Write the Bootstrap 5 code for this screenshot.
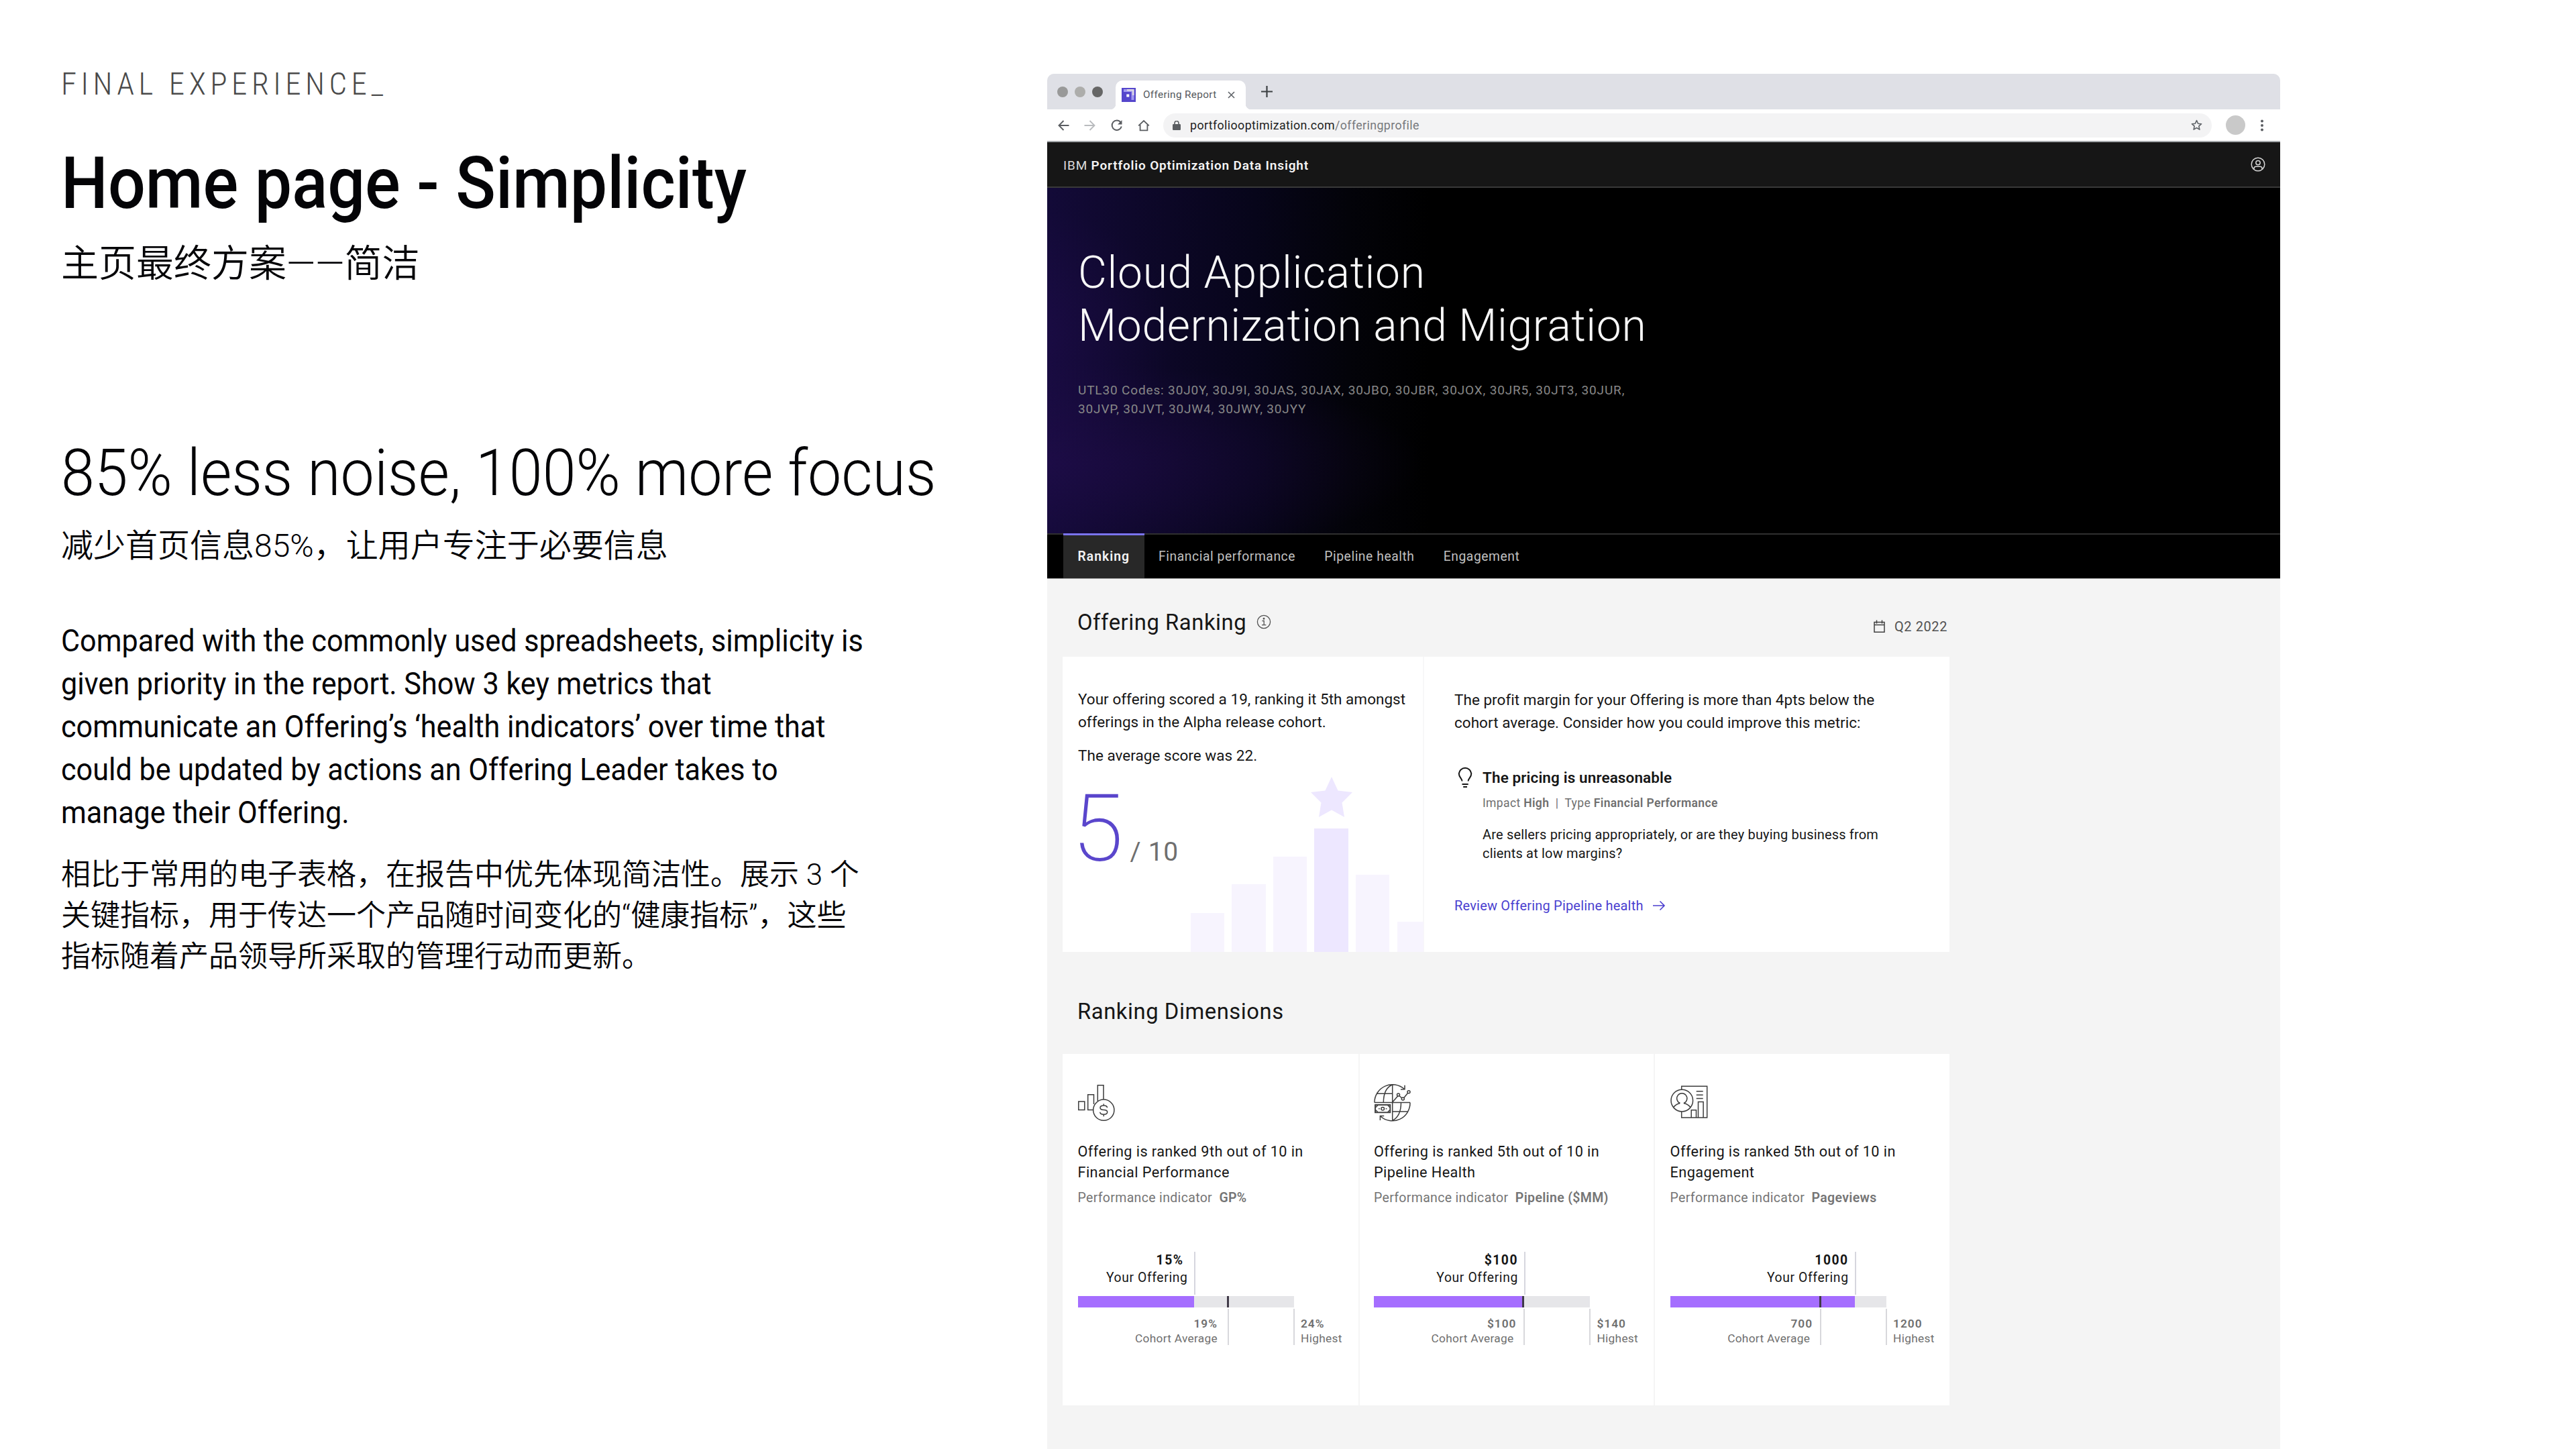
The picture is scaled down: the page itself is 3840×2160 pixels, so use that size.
<!DOCTYPE html>
<html lang="en">
<head>
<meta charset="utf-8">
<meta name="viewport" content="width=device-width, initial-scale=1">
<title>Home page - Simplicity</title>
<link href="https://cdn.jsdelivr.net/npm/bootstrap@5.3.0/dist/css/bootstrap.min.css" rel="stylesheet">
<style>
  body { width: 3840px; height: 2160px; overflow: hidden; background: #fff; color: #161616; font-family: Roboto, "Noto Sans CJK SC", sans-serif; }
  p, h1, h2, h3 { margin: 0; }
  svg { display: block; flex: none; }
  /* left column */
  .story { width: 1561px; padding: 94.6px 0 0 91px; color: #040407; white-space: nowrap; flex: none; }
  .eyebrow { font-size: 47px; line-height: 60px; font-weight: 300; font-stretch: 75%; letter-spacing: 6.45px; color: #4a4a4a; }
  .headline, .claim, .copy { transform-origin: 0 50%; width: max-content; }
  .headline { font-size: 108px; line-height: 130px; font-weight: 500; transform: scaleX(.912); margin-top: 53.4px; }
  .headline-zh { font-size: 56px; line-height: 70px; font-weight: 350; margin-top: 20px; }
  .claim { font-size: 96px; line-height: 116px; font-weight: 300; transform: scaleX(.935); margin-top: 219px; }
  .claim-zh { font-size: 48px; line-height: 60px; font-weight: 350; margin-top: 21.4px; }
  .copy { font-size: 47px; line-height: 64px; transform: scaleX(.918); margin-top: 78.4px; }
  .copy-zh { font-size: 44px; line-height: 61px; font-weight: 350; margin-top: 31px; }
  /* browser window */
  .window { width: 1838px; height: 2050px; margin-top: 110px; border-radius: 10px 10px 0 0; overflow: hidden; background: #f4f4f4; flex: none; }
  .strip { height: 53px; background: #dfe0e6; padding-left: 15px; }
  .light { width: 16px; height: 16px; border-radius: 50%; background: #999; margin-right: 10px; }
  .light.mid { background: #adadab; }
  .light.dark { background: #666; }
  .browser-tab { position: relative; height: 43px; width: 194px; margin-left: 9px; background: #fff; border-radius: 10px 10px 0 0; padding-left: 9px; font-size: 15.3px; letter-spacing: .35px; color: #55585c; }
  .browser-tab::before, .browser-tab::after { content: ""; position: absolute; bottom: 0; width: 8px; height: 8px; }
  .browser-tab::before { left: -8px; background: radial-gradient(circle at 0 0, transparent 8px, #fff 8.5px); }
  .browser-tab::after { right: -8px; background: radial-gradient(circle at 100% 0, transparent 8px, #fff 8.5px); }
  .tab-name { margin-left: 11px; width: 126px; }
  .new-tab { margin-left: 23px; }
  .toolbar { height: 49px; background: #fff; border-bottom: 2px solid #a4a8ab; padding: 0 23px 0 15px; }
  .toolbar > svg + svg { margin-left: 22px; }
  .address { height: 36px; border-radius: 18px; background: #f3f3f4; width: 1563px; margin-left: 20px; padding: 0 14px; font-size: 17.8px; letter-spacing: .4px; color: #222; }
  .address span { padding-top: 1.5px; }
  .address .host { margin-left: 14px; }
  .address .path { color: #77797c; }
  .avatar { width: 29px; height: 29px; border-radius: 50%; background: #c9c9c9; margin-left: 21px; }
  .app-head { height: 68px; background: #161616; border-bottom: 2px solid #393939; color: #f4f4f4; padding: 0 22px 0 24px; font-size: 19px; letter-spacing: .82px; }
  .app-head > div { padding-top: 4px; }
  .app-head span { color: #dcdcdc; }
  .app-head b { font-weight: 600; }
  .hero { height: 515px; padding: 87px 0 0 46px; background:
      radial-gradient(ellipse 560px 150px at 0 410px, rgba(38,14,84,.5), transparent),
      radial-gradient(ellipse 220px 190px at -30px 220px, rgba(40,14,90,.35), transparent),
      linear-gradient(90deg, #130a38 0, #0c0726 180px, #07051a 310px, #030309 450px, #000 570px); }
  .hero h1 { font-size: 66px; line-height: 79px; font-weight: 300; letter-spacing: .65px; color: #f8f8f8; }
  .hero p { font-size: 19px; line-height: 28px; letter-spacing: .85px; color: #878787; margin-top: 42.5px; }
  .section-tabs { height: 68px; background: #000; border-top: 2px solid #2f2f2f; border-bottom: 1px solid #a8a8a8; padding-left: 24px; font-size: 19.3px; letter-spacing: .56px; }
  .section-tabs .nav-link { padding: 1px 21.6px 0; color: #c1c1c1; height: 67px; margin-top: -2px; display: flex; align-items: center; border-radius: 0; border-top: 3px solid transparent; }
  .section-tabs .nav-link.active { background: #282828; color: #f4f4f4; font-weight: 600; border-top-color: #7a73ee; letter-spacing: 1px; }
  .report { margin-left: 23px; width: 1322px; }
  .report-head { height: 116px; padding: 45px 3px 0 22px; }
  .info-icon { margin: 8px 0 0 15px; }
  .section-title { font-size: 32.8px; line-height: 40px; font-weight: 400; letter-spacing: .55px; }
  .dims-title { padding: 69px 0 43px 22px; }
  .period { font-size: 20px; line-height: 28px; color: #525252; letter-spacing: .6px; gap: 14px; margin-top: 12px; }
  .tile { background: #fff; }
  .rank-tile { height: 440px; }
  .score { width: 539px; border-right: 2px solid #f7f7f8; padding: 47px 0 0 23px; position: relative; }
  .advice { padding: 48px 0 0 45px; }
  .body-text { font-size: 22.5px; line-height: 33.5px; letter-spacing: .03px; }
  .body-text + .body-text { margin-top: 17px; }
  .rank-line { margin-top: 22.5px; gap: 10px; }
  .big-rank { font-size: 139px; line-height: 140px; font-weight: 200; color: #5a46cc; margin-left: -9px; }
  .of-ten { font-size: 39px; color: #6f6f6f; letter-spacing: .7px; }
  .histogram { position: absolute; right: -1px; bottom: 0; gap: 11.1px; }
  .histogram .col-bar { width: 50.5px; background: #f7f4fe; }
  .histogram .col-bar:last-child { width: 39.5px; }
  .histogram .top-col { width: 50.5px; gap: 17px; }
  .histogram .top-col .top-bar { width: 50.5px; background: #ede7ff; }
  .tip { margin-top: 48.5px; }
  .tip > svg { margin: 0 15px 0 5px; }
  .tip-title { font-size: 22.5px; line-height: 32px; font-weight: 600; letter-spacing: .12px; }
  .tip-meta { font-size: 17.5px; line-height: 24px; color: #6f6f6f; margin-top: 10.3px; white-space: pre; letter-spacing: .36px; }
  .tip-meta b, .indicator b { font-weight: 600; }
  .tip-text { font-size: 20px; line-height: 28px; margin-top: 21px; letter-spacing: .18px; }
  .review { font-size: 20px; line-height: 28px; color: #4b3fd0; margin-top: 50px; gap: 14px; text-decoration: none; letter-spacing: .2px; }
  .dim { width: 440.67px; height: 523.5px; padding: 46px 0 0 22.5px; }
  .dim + .dim { border-left: 2px solid #f5f5f5; padding-left: 21.3px; }
  .dim + .dim + .dim { padding-left: 22.3px; }
  .dim-icon { height: 54px; overflow: visible; }
  .dim-title { font-size: 21.7px; line-height: 31.3px; margin-top: 30.2px; letter-spacing: .42px; }
  .indicator { font-size: 19.5px; line-height: 26px; color: #757575; margin-top: 9.7px; white-space: pre; letter-spacing: .33px; }
  .upper { height: 64px; margin-top: 66.5px; border-right: 2px solid #d6d6de; text-align: right; padding-right: 9px; font-size: 19.3px; line-height: 26px; letter-spacing: .64px; }
  .upper b { font-weight: 700; letter-spacing: 1.5px; }
  .upper b.inset { margin-right: 6px; }
  .gauge { width: 322px; height: 16.5px; margin-top: 2.5px; background: #e6e6e9; position: relative; }
  .gauge .fill { height: 100%; background: #a56eff; }
  .gauge .tick { position: absolute; top: 0; width: 3px; height: 100%; background: #403a48; }
  .lower { margin-top: 2px; height: 54px; font-size: 17.3px; line-height: 22.6px; color: #6f6f6f; letter-spacing: .3px; }
  .lower > div { padding-top: 10.8px; }
  .lower > div:last-child { padding-left: 9px; }
  .lower .edge { border-right: 2px solid #d8d8dc; text-align: right; width: 98px; }
  .lower .avg { width: 225.5px; padding-right: 15px; }
  .lower b { font-weight: 600; letter-spacing: 1px; }
  .lower b.outset { margin-right: -4px; }
</style>
</head>
<body>
<div class="d-flex align-items-start">
  <section class="story">
    <p class="eyebrow">FINAL EXPERIENCE_</p>
    <h1 class="headline">Home page - Simplicity</h1>
    <p class="headline-zh" lang="zh-CN">主页最终方案——简洁</p>
    <h2 class="claim">85% less noise, 100% more focus</h2>
    <p class="claim-zh" lang="zh-CN">减少首页信息85%，让用户专注于必要信息</p>
    <p class="copy">Compared with the commonly used spreadsheets, simplicity is<br>given priority in the report. Show 3 key metrics that<br>communicate an Offering’s ‘health indicators’ over time that<br>could be updated by actions an Offering Leader takes to<br>manage their Offering.</p>
    <p class="copy-zh" lang="zh-CN">相比于常用的电子表格，在报告中优先体现简洁性。展示 3 个<br>关键指标，用于传达一个产品随时间变化的“健康指标”，这些<br>指标随着产品领导所采取的管理行动而更新。</p>
  </section>

  <main class="window">
    <div class="strip d-flex align-items-end">
      <div class="d-flex align-self-center"><i class="light"></i><i class="light mid"></i><i class="light dark"></i></div>
      <div class="browser-tab d-flex align-items-center">
        <svg width="21" height="21" viewBox="0 0 21 21"><rect width="21" height="21" fill="#5546cc"/><path d="M3 2h15.500v16h-4V6H3z" fill="#a39af0"/><path d="M8 2h10.500v9h-2.500V4.500H8z" fill="#dcd8e4"/><rect x="7.300" y="9.500" width="4" height="4" fill="#fff"/></svg>
        <span class="tab-name">Offering Report</span>
        <svg width="11" height="11" viewBox="0 0 11 11" stroke="#5f6368" stroke-width="1.600"><path d="M1 1l9 9M10 1l-9 9"/></svg>
      </div>
      <svg class="new-tab align-self-center" width="17" height="17" viewBox="0 0 17 17" stroke="#3c4043" stroke-width="2.200"><path d="M8.500 0v17M0 8.500h17"/></svg>
    </div>
    <div class="toolbar d-flex align-items-center">
      <svg width="18" height="18" viewBox="0 0 18 18" fill="none" stroke="#5a5d61" stroke-width="1.900"><path d="M17.500 9H3M9.500 2L2.500 9l7 7"/></svg>
      <svg width="18" height="18" viewBox="0 0 18 18" fill="none" stroke="#b9bbbe" stroke-width="1.900"><path d="M.5 9H15M8.500 2l7 7-7 7"/></svg>
      <svg width="18" height="18" viewBox="0 0 18 18" fill="none" stroke="#5a5d61" stroke-width="2"><path d="M15.800 10.500a7.200 7.200 0 1 1-1.300-6.300l1 1.200"/><path d="M16.500 1v6.500H10z" fill="#5a5d61" stroke="none"/></svg>
      <svg width="18" height="18" viewBox="0 0 18 18" fill="none" stroke="#5a5d61" stroke-width="1.800"><path d="M1.200 9.300L9 2l7.800 7.300M3.600 8v8.300h10.800V8"/></svg>
      <div class="address d-flex align-items-center">
        <svg width="12" height="14" viewBox="0 0 12 14"><rect y="5" width="12" height="9" rx="1.200" fill="#5a5d61"/><path d="M3 6V3.500a3 3 0 0 1 6 0V6" fill="none" stroke="#5a5d61" stroke-width="1.600"/></svg>
        <span class="host">portfoliooptimization.com</span><span class="path">/offeringprofile</span>
        <svg class="ms-auto" width="17" height="17" viewBox="0 0 17 17" fill="none" stroke="#5f6368" stroke-width="1.600" stroke-linejoin="round"><path d="M8.500 1.500l2.100 4.700 5 .5-3.800 3.400 1.100 5-4.400-2.600-4.400 2.600 1.100-5L1.400 6.700l5-.5z"/></svg>
      </div>
      <div class="avatar"></div>
      <svg class="ms-auto" width="8" height="20" viewBox="0 0 8 20" fill="#5a5d61"><circle cx="4" cy="3.500" r="2"/><circle cx="4" cy="10" r="2"/><circle cx="4" cy="16.500" r="2"/></svg>
    </div>
    <header class="app-head d-flex align-items-center justify-content-between">
      <div><span>IBM</span> <b>Portfolio Optimization Data Insight</b></div>
      <svg width="22" height="22" viewBox="0 0 22 22" fill="none" stroke="#d6d6d6" stroke-width="1.500"><circle cx="11" cy="11" r="9.800"/><circle cx="11" cy="8.600" r="3.200"/><path d="M5 18.500v-1.200a3 3 0 0 1 3-3h6a3 3 0 0 1 3 3v1.200"/></svg>
    </header>
    <section class="hero">
      <h1>Cloud Application<br>Modernization and Migration</h1>
      <p>UTL30 Codes: 30J0Y, 30J9I, 30JAS, 30JAX, 30JBO, 30JBR, 30JOX, 30JR5, 30JT3, 30JUR,<br>30JVP, 30JVT, 30JW4, 30JWY, 30JYY</p>
    </section>
    <nav class="section-tabs nav">
      <a class="nav-link active">Ranking</a>
      <a class="nav-link">Financial performance</a>
      <a class="nav-link">Pipeline health</a>
      <a class="nav-link">Engagement</a>
    </nav>
    <div class="report">
      <div class="report-head d-flex align-items-start">
        <h2 class="section-title">Offering Ranking</h2>
        <svg class="info-icon" width="22" height="22" viewBox="0 0 22 22" fill="none" stroke="#525252" stroke-width="1.300"><circle cx="11" cy="11" r="9.600"/><path d="M8.500 9.500h2.700v6M8 15.700h6.300"/><circle cx="11" cy="6.300" r=".8" fill="#525252"/></svg>
        <div class="period d-flex ms-auto align-items-center">
          <svg width="17" height="20" viewBox="0 0 17 20" fill="none" stroke="#404040" stroke-width="1.500"><path d="M1 3.500h15v14.700H1zM1 7.500h15M4.500 .5v5M12.500 .5v5"/></svg>
          <span>Q2 2022</span>
        </div>
      </div>
      <div class="tile rank-tile d-flex">
        <div class="score">
          <p class="body-text">Your offering scored a 19, ranking it 5th amongst<br>offerings in the Alpha release cohort.</p>
          <p class="body-text">The average score was 22.</p>
          <div class="rank-line d-flex align-items-baseline"><span class="big-rank">5</span><span class="of-ten">/ 10</span></div>
          <div class="histogram d-flex align-items-end">
            <div class="col-bar" style="height:58.5px"></div>
            <div class="col-bar" style="height:101.5px"></div>
            <div class="col-bar" style="height:142.5px"></div>
            <div class="top-col d-flex flex-column align-items-center">
              <svg width="62" height="60" viewBox="0 0 62 60" fill="#ede7ff"><path d="M31 0l9.500 20.500L62 23 46.500 38.500 50 60 31 49.500 12 60l3.500-21.500L0 23l21.500-2.500z"/></svg>
              <div class="top-bar" style="height:184.5px"></div>
            </div>
            <div class="col-bar" style="height:115.5px"></div>
            <div class="col-bar" style="height:45.5px"></div>
          </div>
        </div>
        <div class="advice">
          <p class="body-text">The profit margin for your Offering is more than 4pts below the<br>cohort average. Consider how you could improve this metric:</p>
          <div class="tip d-flex">
            <svg width="22" height="32" viewBox="0 0 22 32" fill="none" stroke="#161616" stroke-width="2"><path d="M6.500 21.500c0-4-4.700-5.500-4.700-11.300a9.300 9.300 0 0 1 18.500 0c0 5.800-4.700 7.300-4.700 11.300M6.500 26h9.200M8.200 30h5.800"/></svg>
            <div>
              <p class="tip-title">The pricing is unreasonable</p>
              <p class="tip-meta">Impact <b>High</b>  |  Type <b>Financial Performance</b></p>
              <p class="tip-text">Are sellers pricing appropriately, or are they buying business from<br>clients at low margins?</p>
            </div>
          </div>
          <a class="review d-flex align-items-center">Review Offering Pipeline health
            <svg width="19" height="16" viewBox="0 0 19 16" fill="none" stroke="#4b3fd0" stroke-width="1.600"><path d="M0 8h17M10.500 1.500L17 8l-6.500 6.500"/></svg></a>
        </div>
      </div>
      <h2 class="section-title dims-title">Ranking Dimensions</h2>
      <div class="tile d-flex">
        <article class="dim">
          <svg class="dim-icon" width="55" viewBox="0 0 55 54" fill="none" stroke="#3d3d3d" stroke-width="1.500"><path d="M.8 25h9v12.500h-9zM23.500 29V14.700h-8.800v22.800h8M29.300 24V.8H38v21"/><circle cx="38.300" cy="37.700" r="15.600"/><path d="M43.500 34.300c0-2.200-1.500-3.300-5.200-3.300s-5.300 1.100-5.300 3.300 1.600 3.200 5.300 3.200 5.400 1 5.400 3.300-1.700 3.500-5.400 3.500-5.500-1.200-5.500-3.500M38.300 28.500V31M38.300 44.300v3"/></svg>
          <p class="dim-title">Offering is ranked 9th out of 10 in<br>Financial Performance</p>
          <p class="indicator">Performance indicator  <b>GP%</b></p>
          <div class="upper" style="width:175px"><b class="inset">15%</b><br>Your Offering</div>
          <div class="gauge"><div class="fill" style="width:54%"></div><i class="tick" style="left:222px"></i></div>
          <div class="lower d-flex">
            <div class="edge avg"><b>19%</b><br>Cohort Average</div>
            <div class="edge"></div>
            <div><b>24%</b><br>Highest</div>
          </div>
        </article>
        <article class="dim">
          <svg class="dim-icon" width="55" viewBox="0 1 55 54" fill="none" stroke="#3d3d3d" stroke-width="1.500"><path d="M.9 27.600H54M27.700.8v54M.9 27.600A26.800 26.800 0 0 1 45.500 7.500M46 1.800v6l-6 .2M27.700.8C18 5 14.300 15 14.300 27.600M5 14.300h22.700M54 27.600A26.500 26.500 0 0 1 9.800 48M9.400 54v-6.400h5.800M40.500 27.600c0 12-3 22-12.800 26.800M27.700 41h22.800M27.700 27l8.300-9.500M37.800 17.500l4 3.300M44.800 20.500l5.900-7.200"/><circle cx="36.500" cy="16" r="2"/><circle cx="43.300" cy="22" r="2"/><circle cx="52" cy="11.700" r="2"/><rect x="2" y="31" width="22.300" height="11.300" stroke-width="1.900"/><circle cx="13.200" cy="36.700" r="2.300"/><path d="M2.500 35l3.300-3.500M2.500 38.500l3.300 3.300M24 35l-3.300-3.500M24 38.500l-3.300 3.300M7 36.700h1.700M17.700 36.700h1.700"/></svg>
          <p class="dim-title">Offering is ranked 5th out of 10 in<br>Pipeline Health</p>
          <p class="indicator">Performance indicator  <b>Pipeline ($MM)</b></p>
          <div class="upper" style="width:226px"><b>$100</b><br>Your Offering</div>
          <div class="gauge"><div class="fill" style="width:69.5%"></div><i class="tick" style="left:221.5px"></i></div>
          <div class="lower d-flex">
            <div class="edge avg"><b class="outset">$100</b><br>Cohort Average</div>
            <div class="edge"></div>
            <div><b>$140</b><br>Highest</div>
          </div>
        </article>
        <article class="dim">
          <svg class="dim-icon" width="56" viewBox="0 0 56 54" fill="none" stroke="#3d3d3d" stroke-width="1.500"><path d="M16.700 7.300v-5h38v46.600h-38v-9M38.700 9.700h10M38.700 15.200h10M38.700 20.400h10M31.200 48.900V37.800h7.300v11.100M41.500 48.900V25.600h7.600v23.300"/><circle cx="17.300" cy="23.600" r="16.300"/><path d="M14 27.700v-.5a7.600 7.600 0 1 1 6.500 0v.5c4 .8 7 2.600 9.500 6M14 27.700c-4 .8-7 2.600-9.500 6"/></svg>
          <p class="dim-title">Offering is ranked 5th out of 10 in<br>Engagement</p>
          <p class="indicator">Performance indicator  <b>Pageviews</b></p>
          <div class="upper" style="width:277px"><b>1000</b><br>Your Offering</div>
          <div class="gauge"><div class="fill" style="width:85.6%"></div><i class="tick" style="left:222px"></i></div>
          <div class="lower d-flex">
            <div class="edge avg"><b class="outset">700</b><br>Cohort Average</div>
            <div class="edge"></div>
            <div><b>1200</b><br>Highest</div>
          </div>
        </article>
      </div>
    </div>
  </main>
</div>
<script src="https://cdn.jsdelivr.net/npm/bootstrap@5.3.0/dist/js/bootstrap.bundle.min.js"></script>
</body>
</html>
